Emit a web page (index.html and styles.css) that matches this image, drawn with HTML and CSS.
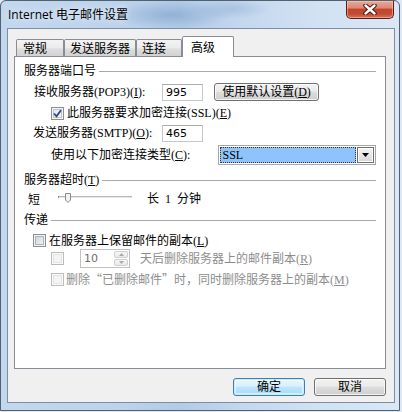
FILE: index.html
```html
<!DOCTYPE html>
<html lang="zh-CN">
<head>
<meta charset="utf-8">
<title>Internet 电子邮件设置</title>
<link rel="stylesheet" href="styles.css">
</head>
<body>
<div class="window">
  <div class="titlebar">
    <span class="title">Internet 电子邮件设置</span>
    <div class="close">
      <svg width="14" height="11" viewBox="0 0 14 11"><path d="M2.5 1.5 L11.5 9.5 M11.5 1.5 L2.5 9.5" stroke="#4a1309" stroke-width="4.4" stroke-linecap="round" fill="none"/><path d="M2.5 1.5 L11.5 9.5 M11.5 1.5 L2.5 9.5" stroke="#ffffff" stroke-width="2.4" stroke-linecap="round" fill="none"/></svg>
    </div>
  </div>
  <div class="client">
    <div class="tabs">
      <div class="tab t1">常规</div>
      <div class="tab t2">发送服务器</div>
      <div class="tab t3">连接</div>
      <div class="tab active">高级</div>
    </div>
    <div class="panel">
      <div class="hdr hdr1"><span>服务器端口号</span><i class="rule"></i></div>

      <div class="row r1">
        <span class="lbl l1">接收服务器(POP3)(<u>I</u>):</span>
        <div class="field">995</div>
        <div class="btn defbtn">使用默认设置(<u>D</u>)</div>
      </div>

      <div class="row r2">
        <span class="cb checked"><svg width="9" height="9" viewBox="0 0 9 9"><path d="M1 4.5 L3.5 7.3 L8 1.2" stroke="#2b4a8c" stroke-width="1.8" fill="none"/></svg></span>
        <span class="cbtext">此服务器要求加密连接(SSL)(<u>E</u>)</span>
      </div>

      <div class="row r3">
        <span class="lbl l3">发送服务器(SMTP)(<u>O</u>):</span>
        <div class="field">465</div>
      </div>

      <div class="row r4">
        <span class="lbl l4">使用以下加密连接类型(<u>C</u>):</span>
        <div class="combo">
          <div class="combo-val">SSL</div>
          <div class="combo-btn"><svg width="7" height="4" viewBox="0 0 7 4"><path d="M0 0 H7 L3.5 4 Z" fill="#000"/></svg></div>
        </div>
      </div>

      <div class="hdr hdr2"><span>服务器超时(<u>T</u>)</span><i class="rule"></i></div>

      <div class="row r5">
        <span class="short">短</span>
        <svg class="slider" width="74" height="12" viewBox="0 0 74 12">
          <rect x="0" y="3" width="74" height="1" fill="#b9b9b9"/>
          <rect x="0" y="4" width="74" height="1" fill="#e6e6e6"/>
          <rect x="0" y="3" width="1" height="2" fill="#8a8a8a"/>
          <path d="M7.5 0.5 H12.5 V7 L10 9.5 L7.5 7 Z" fill="#f3f3f3" stroke="#8c8c8c" stroke-width="1"/>
        </svg>
        <span class="long">长&nbsp;&nbsp;1&nbsp;&nbsp;分钟</span>
      </div>

      <div class="hdr hdr3"><span>传递</span><i class="rule"></i></div>

      <div class="row r6">
        <span class="cb"></span>
        <span class="cbtext">在服务器上保留邮件的副本(<u>L</u>)</span>
      </div>

      <div class="row r7">
        <span class="cb disabled"></span>
        <div class="spin">
          <span class="spin-val">10</span>
          <div class="spin-btns">
            <div class="sb"><svg width="5" height="3" viewBox="0 0 5 3"><path d="M0 3 H5 L2.5 0 Z" fill="#a8a8a8"/></svg></div>
            <div class="sb"><svg width="5" height="3" viewBox="0 0 5 3"><path d="M0 0 H5 L2.5 3 Z" fill="#a8a8a8"/></svg></div>
          </div>
        </div>
        <span class="dis">天后删除服务器上的邮件副本(<u>R</u>)</span>
      </div>

      <div class="row r8">
        <span class="cb disabled"></span>
        <span class="dis deltext">删除<span class="cj">“</span>已删除邮件<span class="cj">”</span>时，同时删除服务器上的副本(<u>M</u>)</span>
      </div>
    </div>
    <div class="buttons">
      <div class="btn okbtn">确定</div>
      <div class="btn">取消</div>
    </div>
  </div>
</div>
</body>
</html>
```

FILE: styles.css
```css
html, body {
  margin: 0;
  padding: 0;
}
body {
  width: 402px;
  height: 412px;
  background: #dde8f4;
  font-family: "Liberation Serif", "Noto Sans CJK SC", serif;
  font-size: 12px;
  color: #000;
  overflow: hidden;
}
.window {
  box-sizing: border-box;
  width: 400px;
  height: 411px;
  border: 1px solid #52616f;
  border-radius: 6px 6px 0 0;
  padding: 0 4px 7px 6px;
  display: flex;
  flex-direction: column;
  background:
    radial-gradient(ellipse 60px 14px at 170px 14px, rgba(120,155,200,0.55), rgba(120,155,200,0) 100%),
    radial-gradient(ellipse 40px 10px at 230px 8px, rgba(140,170,210,0.45), rgba(140,170,210,0) 100%),
    linear-gradient(90deg, #c3d8ee 0%, #bdd3eb 30%, #b3cbe7 45%, #c3d7ee 60%, #d2e2f3 80%, #d9e7f6 100%);
}
.titlebar {
  height: 27px;
  display: flex;
  align-items: flex-start;
  justify-content: space-between;
  padding-left: 1px;
}
.title {
  font-family: "Open Sans", "Noto Sans CJK SC", sans-serif;
  font-size: 12px;
  line-height: 14px;
  margin-top: 7px;
  color: #000;
  text-shadow: 0 0 6px rgba(255,255,255,0.9);
}
.close {
  box-sizing: border-box;
  width: 48px;
  height: 18px;
  margin-right: 1px;
  border: 1px solid #5b1d12;
  border-top: none;
  border-radius: 0 0 5px 5px;
  background: linear-gradient(#e9a899 0%, #d98a77 40%, #c5452c 50%, #c24a32 75%, #d9715a 100%);
  box-shadow: inset 0 0 0 1px rgba(255,220,210,0.45);
  display: flex;
  align-items: center;
  justify-content: center;
}
.client {
  box-sizing: border-box;
  flex: 1;
  background: #f0f0f0;
  border: 1px solid #7f8da0;
  padding: 7px 8px 0 6px;
  display: flex;
  flex-direction: column;
}
.tabs {
  display: flex;
  align-items: flex-end;
  height: 20px;
  margin-left: 2px;
}
.tab {
  box-sizing: border-box;
  height: 17px;
  border: 1px solid #898c95;
  border-bottom: none;
  border-radius: 2px 2px 0 0;
  background: linear-gradient(#f3f3f3 0%, #ebebeb 50%, #dedede 55%, #d2d2d2 100%);
  font-family: "Noto Sans CJK SC", sans-serif;
  line-height: 15px;
  padding-left: 5px;
}
.t1 { width: 48px; padding-left: 6px; }
.t2 { width: 72px; }
.t3 { width: 46px; }
.tab.active {
  width: 52px;
  height: 21px;
  margin-bottom: -1px;
  position: relative;
  z-index: 1;
  background: #fff;
  padding-left: 8px;
  line-height: 19px;
}
.panel {
  box-sizing: border-box;
  width: 372px;
  height: 313px;
  background: #fff;
  border: 1px solid #898c95;
  padding: 6px 9px 0 0;
  display: flex;
  flex-direction: column;
}
.hdr {
  display: flex;
  align-items: center;
  height: 16px;
  padding-left: 9px;
  line-height: 14px;
}
.rule {
  flex: 1;
  height: 1px;
  background: #a9a9a9;
  margin-left: 3px;
}
.hdr2 { margin-top: 7px; }
.hdr3 { margin-top: 5px; }
.row {
  display: flex;
  align-items: center;
  line-height: 14px;
  white-space: nowrap;
}
.r1 { height: 18px; margin-top: 4px; }
.r2 { height: 14px; margin-top: 5px; }
.r3 { height: 18px; margin-top: 4px; }
.r4 { height: 20px; margin-top: 3px; }
.r5 { height: 16px; margin-top: 3px; }
.r6 { height: 15px; margin-top: 5px; }
.r7 { height: 19px; margin-top: 1px; }
.r8 { height: 14px; margin-top: 4px; }
.lbl { display: inline-block; }
.l1 { margin-left: 19px; width: 128px; }
.l3 { margin-left: 18px; width: 129px; }
.l4 { margin-left: 36px; width: 168px; }
.field {
  box-sizing: border-box;
  width: 41px;
  height: 17px;
  border: 1px solid #c3c8ce;
  border-top-color: #abadb3;
  background: #fff;
  font-family: "DejaVu Sans", sans-serif;
  font-size: 11px;
  line-height: 15px;
  padding-left: 3px;
}
.btn {
  box-sizing: border-box;
  height: 18px;
  border: 1px solid #707070;
  border-radius: 3px;
  background: linear-gradient(#f2f2f2 0%, #ebebeb 45%, #dddddd 50%, #cfcfcf 100%);
  box-shadow: inset 0 0 0 1px rgba(255,255,255,0.75);
  display: flex;
  align-items: center;
  justify-content: center;
  line-height: 14px;
}
.defbtn {
  width: 105px;
  margin-left: 11px;
}
.cb {
  box-sizing: border-box;
  width: 13px;
  height: 13px;
  border: 1px solid #8e8f8f;
  background: linear-gradient(135deg, #cbcfd5 0%, #e6e8ea 60%, #f6f6f6 100%);
  box-shadow: inset 0 0 0 1px #f4f4f4, inset 0 0 0 2px #aeb3b9;
  display: inline-flex;
  align-items: center;
  justify-content: center;
  flex: none;
}
.cb.checked {
  background: linear-gradient(135deg, #dfe3e8 0%, #f0f1f3 60%, #fafafa 100%);
  box-shadow: inset 0 0 0 1px #f4f4f4, inset 0 0 0 2px #c2c6cb;
}
.cb.disabled {
  border-color: #bcbcbc;
  background: #f4f4f4;
  box-shadow: inset 0 0 0 1px #fafafa, inset 0 0 0 2px #e4e4e4;
}
.r2 .cb { margin-left: 36px; }
.r2 .cbtext { margin-left: 3px; }
.r6 .cb { margin-left: 18px; }
.r6 .cbtext { margin-left: 3px; }
.r7 .cb { margin-left: 36px; }
.r8 .cb { margin-left: 36px; }
.combo {
  box-sizing: border-box;
  width: 158px;
  height: 20px;
  border: 1px solid #a7a7a7;
  background: #fff;
  padding: 1px;
  display: flex;
}
.combo-val {
  flex: 1;
  box-sizing: border-box;
  background: #8ec4fb;
  border: 1px dotted #333;
  line-height: 14px;
  padding-left: 1px;
  font-family: "Liberation Serif", serif;
}
.combo-btn {
  box-sizing: border-box;
  width: 17px;
  margin-left: 1px;
  border: 1px solid #6e6e6e;
  background: linear-gradient(#f4f4f4 0%, #e6e6e6 50%, #d6d6d6 100%);
  box-shadow: inset 0 0 0 1px #fff;
  display: flex;
  align-items: center;
  justify-content: center;
}
.short { margin-left: 13px; font-family: "Noto Sans CJK SC", sans-serif; }
.slider { margin-left: 18px; }
.long { margin-left: 15px; }
.spin {
  box-sizing: border-box;
  width: 50px;
  height: 19px;
  margin-left: 16px;
  border: 1px solid #c2c2c2;
  background: #fff;
  display: flex;
  align-items: center;
}
.spin-val {
  flex: 1;
  padding-left: 3px;
  font-family: "DejaVu Sans", sans-serif;
  font-size: 11px;
  color: #6d6d6d;
}
.spin-btns {
  width: 14px;
  height: 15px;
  margin-right: 1px;
  display: flex;
  flex-direction: column;
  gap: 1px;
}
.sb {
  flex: 1;
  box-sizing: border-box;
  border: 1px solid #cfcfcf;
  border-radius: 2px;
  background: linear-gradient(#f7f7f7, #e9e9e9);
  display: flex;
  align-items: center;
  justify-content: center;
}
.dis { color: #8d8d8d; }
.r7 .dis { margin-left: 10px; }
.deltext { margin-left: 2px; }
.cj { font-family: "Noto Sans CJK SC", sans-serif; }
.buttons {
  display: flex;
  justify-content: flex-end;
  gap: 9px;
  margin-top: 9px;
}
.buttons .btn { width: 72px; }
.okbtn {
  border-color: #3c7fb1;
  background: linear-gradient(#eaf6fd 0%, #d9f0fc 45%, #bee6fd 50%, #a7d9f5 100%);
  box-shadow: inset 0 0 0 1px #c6ecff, inset 0 0 0 2px rgba(255,255,255,0.5);
}
```
